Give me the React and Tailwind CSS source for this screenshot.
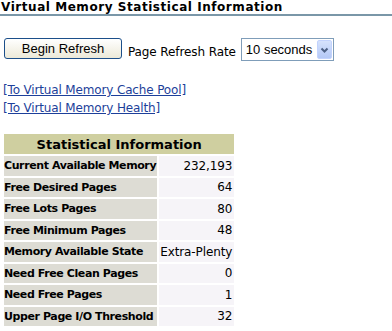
import React from 'react';

const rows = [
  ['Current Available Memory', '232,193'],
  ['Free Desired Pages', '64'],
  ['Free Lots Pages', '80'],
  ['Free Minimum Pages', '48'],
  ['Memory Available State', 'Extra-Plenty'],
  ['Need Free Clean Pages', '0'],
  ['Need Free Pages', '1'],
  ['Upper Page I/O Threshold', '32'],
];

export default function App() {
  return (
    <div className="w-[392px] h-[331px] overflow-hidden bg-white text-black font-['DejaVu_Sans',sans-serif]">
      {/* Page title */}
      <div className="h-[16px] border-b-2 border-[#7a97a8] pl-[1px] text-[12px] font-bold leading-[14px] tracking-[0.55px]">
        Virtual Memory Statistical Information
      </div>

      {/* Refresh controls */}
      <div className="flex items-center mt-[21px] pl-[4px] h-[23px]">
        <button className="w-[118px] h-[21px] rounded-[3px] border border-[#1c4f8a] bg-gradient-to-b from-white to-[#ece9d8] font-['Liberation_Sans',sans-serif] text-[13px] leading-none text-black">
          Begin Refresh
        </button>
        <span className="ml-[6px] mt-[6px] text-[12px] leading-none tracking-[-0.1px]">Page Refresh Rate</span>
        <div className="ml-[5px] mt-[2px] flex items-center w-[93px] h-[23px] border border-[#7f9db9] bg-white">
          <span className="flex-1 pl-[4px] font-['Liberation_Sans',sans-serif] text-[13px] leading-none">10 seconds</span>
          <span className="mr-[1px] flex items-center justify-center w-[15px] h-[19px] rounded-[2px] bg-gradient-to-b from-[#d6e3fd] to-[#b4c8f6] border border-[#c3d3fd]">
            <svg width="9" height="6" viewBox="0 0 9 6">
              <path d="M1.5 1.5 L4.5 4.5 L7.5 1.5" fill="none" stroke="#4d6185" strokeWidth="2" />
            </svg>
          </span>
        </div>
      </div>

      {/* Links */}
      <div className="mt-[21px] pl-[3px] flex flex-col text-[12px] leading-[18px] tracking-[-0.15px] text-[#1d3f9a]">
        <a href="#" className="underline w-fit">[To Virtual Memory Cache Pool]</a>
        <a href="#" className="underline w-fit">[To Virtual Memory Health]</a>
      </div>

      {/* Statistics table */}
      <table className="mt-[15px] ml-[2px] border-separate border-spacing-[2px]">
        <thead>
          <tr>
            <th colSpan={2} className="h-[20px] p-0 bg-[#cfcfa0] text-[13px] font-bold leading-none text-center">
              Statistical Information
            </th>
          </tr>
        </thead>
        <tbody>
          {rows.map(([label, value]) => (
            <tr key={label}>
              <td className="h-[19.5px] p-0 pr-[1px] bg-[#dddcd4] text-[11px] font-bold leading-none tracking-[-0.4px] whitespace-nowrap">
                {label}
              </td>
              <td className="h-[19.5px] p-0 pl-[1px] pr-[2px] bg-[#f6f4f8] text-[12px] leading-none tracking-[-0.1px] text-right whitespace-nowrap">
                {value}
              </td>
            </tr>
          ))}
        </tbody>
      </table>
    </div>
  );
}
